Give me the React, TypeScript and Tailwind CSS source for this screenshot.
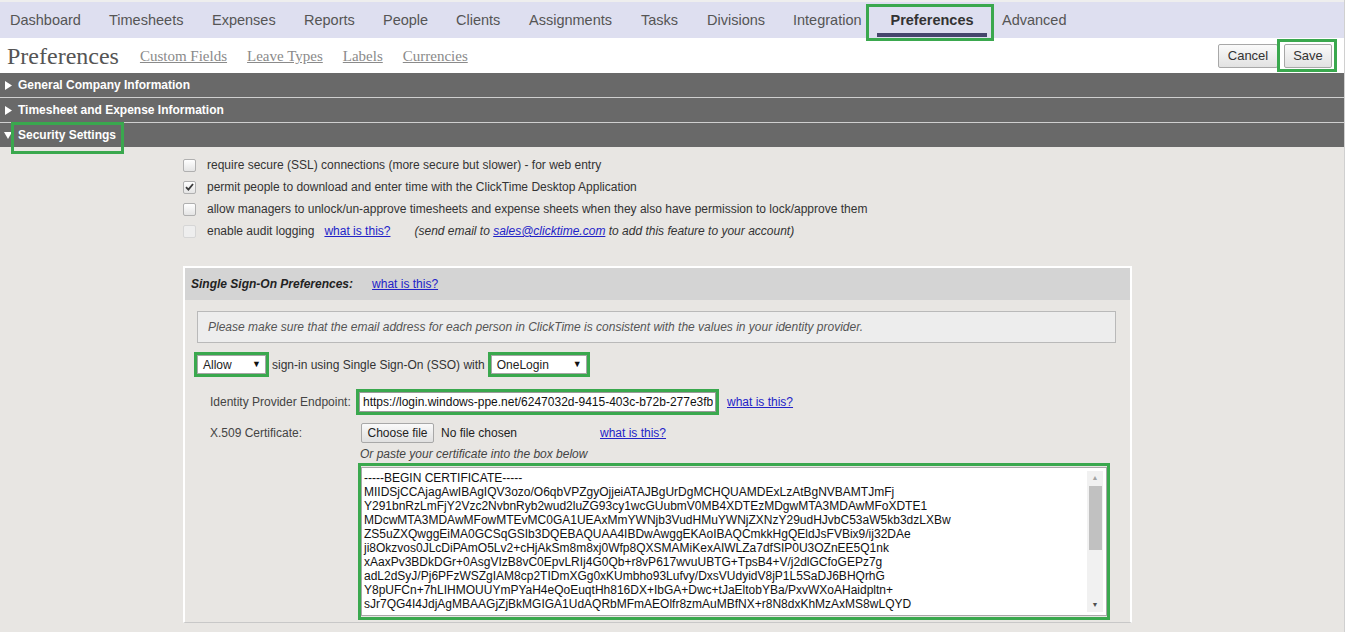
import React from "react";

const certLines = [
  "-----BEGIN CERTIFICATE-----",
  "MIIDSjCCAjagAwIBAgIQV3ozo/O6qbVPZgyOjjeiATAJBgUrDgMCHQUAMDExLzAtBgNVBAMTJmFj",
  "Y291bnRzLmFjY2Vzc2NvbnRyb2wud2luZG93cy1wcGUubmV0MB4XDTEzMDgwMTA3MDAwMFoXDTE1",
  "MDcwMTA3MDAwMFowMTEvMC0GA1UEAxMmYWNjb3VudHMuYWNjZXNzY29udHJvbC53aW5kb3dzLXBw",
  "ZS5uZXQwggEiMA0GCSqGSIb3DQEBAQUAA4IBDwAwggEKAoIBAQCmkkHgQEldJsFVBix9/ij32DAe",
  "ji8Okzvos0JLcDiPAmO5Lv2+cHjAkSm8m8xj0Wfp8QXSMAMiKexAIWLZa7dfSIP0U3OZnEE5Q1nk",
  "xAaxPv3BDkDGr+0AsgVIzB8vC0EpvLRIj4G0Qb+r8vP617wvuUBTG+TpsB4+V/j2dlGCfoGEPz7g",
  "adL2dSyJ/Pj6PFzWSZgIAM8cp2TIDmXGg0xKUmbho93Lufvy/DxsVUdyidV8jP1L5SaDJ6BHQrhG",
  "Y8pUFCn+7hLIHMOUUYmPYaH4eQoEuqtHh816DX+IbGA+Dwc+tJaEltobYBa/PxvWXoAHaidpltn+",
  "sJr7QG4I4JdjAgMBAAGjZjBkMGIGA1UdAQRbMFmAEOlfr8zmAuMBfNX+r8N8dxKhMzAxMS8wLQYD",
];

function Green({ cls }: { cls: string }) {
  return <span className={"pointer-events-none absolute border-[3px] border-[#3aa84e] z-10 " + cls} />;
}

function Checkbox({ checked, disabled }: { checked?: boolean; disabled?: boolean }) {
  return (
    <span
      className={
        "flex h-[13px] w-[13px] items-center justify-center rounded-[2px] border " +
        (disabled
          ? "border-[#d6d6d6] bg-[#eeeeee]"
          : "border-[#b0b0b0] bg-gradient-to-b from-[#ffffff] to-[#e4e4e4]")
      }
    >
      {checked && (
        <svg width="9" height="8" viewBox="0 0 9 8">
          <path d="M1 4.2 L3.4 6.6 L8 1" fill="none" stroke="#3a3a3a" strokeWidth="1.8" />
        </svg>
      )}
    </span>
  );
}

function Tri({ down }: { down?: boolean }) {
  return down ? (
    <svg width="8" height="8" viewBox="0 0 8 8" className="shrink-0">
      <polygon points="0,1 8,1 4,8" fill="#ffffff" />
    </svg>
  ) : (
    <svg width="8" height="9" viewBox="0 0 8 9" className="shrink-0">
      <polygon points="0,0 7,4.5 0,9" fill="#ffffff" />
    </svg>
  );
}

function Select({ value, w }: { value: string; w: string }) {
  return (
    <span className={"relative flex h-[19px] items-center justify-between border border-[#a6a6a6] bg-white pl-[5px] pr-[4px] text-[12px] text-[#222] " + w}>
      <span>{value}</span>
      <span className="text-[9px] text-[#111]">▼</span>
      <Green cls="-inset-[4px]" />
    </span>
  );
}

const link = "text-[#2323c8] underline";

export default function App() {
  const navItems: [string, string][] = [
    ["Dashboard", "w-[99px]"],
    ["Timesheets", "w-[103px]"],
    ["Expenses", "w-[92px]"],
    ["Reports", "w-[79px]"],
    ["People", "w-[73px]"],
    ["Clients", "w-[73px]"],
    ["Assignments", "w-[112px]"],
    ["Tasks", "w-[66px]"],
    ["Divisions", "w-[86px]"],
    ["Integration", "w-[84px]"],
  ];

  return (
    <div className="h-[632px] w-[1349px] overflow-hidden bg-white font-['Liberation_Sans',Arial,sans-serif]">
      <div className="flex h-full w-[1345px] flex-col border-r border-[#d0d0d0]">
        {/* Top nav */}
        <nav className="flex h-[38px] shrink-0 items-stretch border-t-2 border-[#eeeeee] bg-[#dedff0] pl-[10px] pt-[2px] text-[14.5px] text-[#555]">
          {navItems.map(([t, w]) => (
            <span key={t} className={"flex items-center " + w}>
              {t}
            </span>
          ))}
          <span className="relative flex w-[110px] items-center justify-center font-bold text-[#333]">
            Preferences
            <span className="absolute bottom-[1px] left-0 right-0 h-[4px] bg-[#45466c]" />
            <Green cls="-left-[11px] -right-[7px] top-0 -bottom-[3px]" />
          </span>
          <span className="ml-[15px] flex items-center">Advanced</span>
        </nav>

        {/* Header row */}
        <div className="flex h-[35px] shrink-0 items-center pl-[7px]">
          <span className="font-['Liberation_Serif','Times_New_Roman',serif] text-[24px] leading-none text-[#555]">Preferences</span>
          <div className="ml-[21px] mt-[1px] flex gap-[20px] font-['Liberation_Serif','Times_New_Roman',serif] text-[15px] text-[#8a8a8a]">
            <span className="underline">Custom Fields</span>
            <span className="underline">Leave Types</span>
            <span className="underline">Labels</span>
            <span className="underline">Currencies</span>
          </div>
          <div className="ml-auto mr-[12px] flex gap-[6px] pt-[1px]">
            <span className="flex h-[24px] w-[60px] items-center justify-center rounded-[2px] border border-[#a8a8a8] bg-gradient-to-b from-[#fafafa] to-[#e2e2e2] text-[13px] text-[#333]">
              Cancel
            </span>
            <span className="relative flex h-[24px] w-[48px] items-center justify-center rounded-[2px] border border-[#a8a8a8] bg-gradient-to-b from-[#fafafa] to-[#e2e2e2] text-[13px] text-[#333]">
              Save
              <Green cls="-left-[8px] -right-[6px] -top-[6px] -bottom-[5px]" />
            </span>
          </div>
        </div>

        {/* Section bars */}
        <div className="flex h-[24px] shrink-0 items-center gap-[5px] bg-[#696969] pl-[5px] text-[12px] font-bold text-white">
          <Tri />
          <span>General Company Information</span>
        </div>
        <div className="flex h-[25px] shrink-0 items-center gap-[5px] border-t border-[#cfcfcf] bg-[#696969] pl-[5px] text-[12px] font-bold text-white">
          <Tri />
          <span>Timesheet and Expense Information</span>
        </div>
        <div className="relative flex h-[25px] shrink-0 items-center gap-[6px] border-t border-[#cfcfcf] bg-[#696969] pl-[4px] text-[12px] font-bold text-white">
          <Tri down />
          <span>Security Settings</span>
          <Green cls="left-[11px] -top-[1px] w-[113px] h-[32px]" />
        </div>

        {/* Content */}
        <div className="flex-1 bg-[#e8e6e3] pl-[183px] pt-[7px] text-[12px] text-[#333]">
          <div className="flex h-[22px] items-center gap-[11px]">
            <Checkbox />
            <span>require secure (SSL) connections (more secure but slower) - for web entry</span>
          </div>
          <div className="flex h-[22px] items-center gap-[11px]">
            <Checkbox checked />
            <span>permit people to download and enter time with the ClickTime Desktop Application</span>
          </div>
          <div className="flex h-[22px] items-center gap-[11px]">
            <Checkbox />
            <span>allow managers to unlock/un-approve timesheets and expense sheets when they also have permission to lock/approve them</span>
          </div>
          <div className="flex h-[22px] items-center gap-[11px]">
            <Checkbox disabled />
            <span>enable audit logging</span>
            <span className={"ml-[-1px] " + link}>what is this?</span>
            <span className="ml-[13px] italic">
              (send email to <span className={link}>sales@clicktime.com</span> to add this feature to your account)
            </span>
          </div>

          {/* SSO box */}
          <div className="mt-[24px] w-[949px] border-2 border-b border-white border-b-[#c8c8c8] pb-[6px]">
            <div className="flex h-[32px] items-center gap-[19px] bg-[#d4d4d4] pl-[6px]">
              <span className="font-bold italic text-[#222]">Single Sign-On Preferences:</span>
              <span className={link}>what is this?</span>
            </div>
            <div className="px-[12px]">
              <div className="mt-[11px] flex h-[32px] w-[919px] items-center border border-[#b9b9b9] bg-[#ededed] pl-[10px] italic text-[#555]">
                Please make sure that the email address for each person in ClickTime is consistent with the values in your identity provider.
              </div>

              <div className="mt-[12px] flex h-[19px] items-center">
                <Select value="Allow" w="w-[69px]" />
                <span className="ml-[6px] mr-[6px]">sign-in using Single Sign-On (SSO) with</span>
                <Select value="OneLogin" w="w-[96px]" />
              </div>

              <div className="mt-[18px] flex h-[20px] items-center">
                <span className="w-[162px] pl-[13px] text-[#444]">Identity Provider Endpoint:</span>
                <span className="relative flex h-[20px] w-[357px] items-center border border-[#9a9a9a] bg-white pl-[3px] text-[#111]">
                  <span className="overflow-hidden whitespace-nowrap">https://login.windows-ppe.net/6247032d-9415-403c-b72b-277e3fb</span>
                  <Green cls="-inset-[4px]" />
                </span>
                <span className={"ml-[11px] " + link}>what is this?</span>
              </div>

              <div className="mt-[11px] flex h-[20px] items-center">
                <span className="w-[162px] pl-[13px] text-[#444]">X.509 Certificate:</span>
                <span className="ml-[2px] flex h-[20px] w-[73px] items-center justify-center rounded-[2px] border border-[#a8a8a8] bg-gradient-to-b from-[#fafafa] to-[#e0e0e0] text-[#222]">
                  Choose file
                </span>
                <span className="w-[166px] pl-[7px] text-[#222]">No file chosen</span>
                <span className={link}>what is this?</span>
              </div>

              <div className="mt-[4px] h-[14px] pl-[163px] leading-[14px] italic text-[#444]">Or paste your certificate into the box below</div>

              <div className="relative ml-[164px] mt-[6px] h-[149px] w-[746px] border border-[#a8a8a8] bg-white">
                <div className="overflow-hidden pl-[2px] pt-[3px] leading-[14px] text-[#111]">
                  {certLines.map((l, i) => (
                    <div key={i} className="whitespace-nowrap">
                      {l}
                    </div>
                  ))}
                </div>
                <div className="absolute bottom-[3px] right-[3px] top-[3px] flex w-[16px] flex-col items-center bg-[#f1f1f1]">
                  <span className="flex h-[14px] items-center text-[7px] text-[#a3a3a3]">▲</span>
                  <span className="mt-[1px] h-[64px] w-[13px] bg-[#c1c1c1]" />
                  <span className="mt-auto flex h-[14px] items-center text-[7px] text-[#505050]">▼</span>
                </div>
                <Green cls="-left-[4px] -right-[4px] -top-[5px] -bottom-[5px]" />
              </div>
            </div>
          </div>
        </div>
      </div>
    </div>
  );
}
